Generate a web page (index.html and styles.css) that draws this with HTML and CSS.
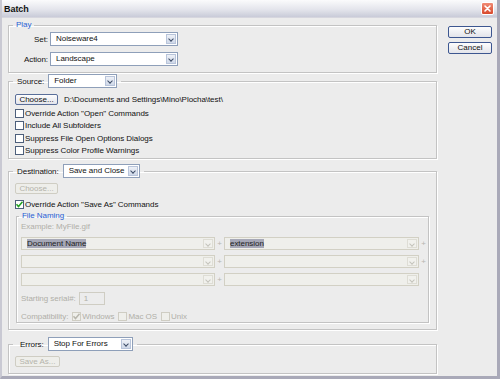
FILE: index.html
```html
<!DOCTYPE html>
<html lang="en">

<head>
    <meta charset="UTF-8">
    <meta name="viewport" content="width=device-width, initial-scale=1.0">
    <title>Batch</title>
    <link rel="stylesheet" href="styles.css">
</head>

<body>
    <div class="window">
        <div class="titlebar">
            <span class="title">Batch</span>
            <span class="close">
                <svg width="11" height="11" viewBox="0 0 11 11">
                    <path d="M3 3 L8 8 M8 3 L3 8" stroke="#fff" stroke-width="1.6" stroke-linecap="round" />
                </svg>
            </span>
        </div>

        <div class="client">
            <div class="groups">

                <fieldset class="group play">
                    <legend class="caption">Play</legend>
                    <div class="field-grid">
                        <span class="field-label">Set:</span>
                        <div class="select w-set"><span class="value">Noiseware4</span><span class="arrow"></span></div>
                        <span class="field-label">Action:</span>
                        <div class="select w-set"><span class="value">Landscape</span><span class="arrow"></span></div>
                    </div>
                </fieldset>

                <fieldset class="group source">
                    <legend class="legend-field">
                        <span>Source:</span>
                        <div class="select w-source"><span class="value">Folder</span><span class="arrow"></span></div>
                    </legend>
                    <div class="choose-row">
                        <button class="btn">Choose...</button>
                        <span class="path">D:\Documents and Settings\Mino\Plocha\test\</span>
                    </div>
                    <div class="check-list">
                        <label class="check"><span class="box"></span>Override Action "Open" Commands</label>
                        <label class="check"><span class="box"></span>Include All Subfolders</label>
                        <label class="check"><span class="box"></span>Suppress File Open Options Dialogs</label>
                        <label class="check"><span class="box"></span>Suppress Color Profile Warnings</label>
                    </div>
                </fieldset>

                <fieldset class="group destination">
                    <legend class="legend-field">
                        <span>Destination:</span>
                        <div class="select w-dest"><span class="value">Save and Close</span><span class="arrow"></span></div>
                    </legend>
                    <div class="choose-row">
                        <button class="btn disabled">Choose...</button>
                    </div>
                    <label class="check override"><span class="box checked">
                        <svg width="9" height="9" viewBox="0 0 9 9">
                            <path d="M1.5 4.2 L3.5 6.5 L7.5 1.8" fill="none" stroke="#21a121" stroke-width="1.5" />
                        </svg>
                    </span>Override Action "Save As" Commands</label>

                    <fieldset class="group naming">
                        <legend class="caption">File Naming</legend>
                        <div class="example">Example: MyFile.gif</div>
                        <div class="name-rows">
                            <div class="name-row">
                                <div class="select off"><span class="value"><mark>Document Name</mark></span><span class="arrow"></span></div>
                                <span class="plus">+</span>
                                <div class="select off"><span class="value"><mark>extension</mark></span><span class="arrow"></span></div>
                                <span class="plus">+</span>
                            </div>
                            <div class="name-row">
                                <div class="select off"><span class="value"></span><span class="arrow"></span></div>
                                <span class="plus">+</span>
                                <div class="select off"><span class="value"></span><span class="arrow"></span></div>
                                <span class="plus">+</span>
                            </div>
                            <div class="name-row">
                                <div class="select off"><span class="value"></span><span class="arrow"></span></div>
                                <span class="plus">+</span>
                                <div class="select off"><span class="value"></span><span class="arrow"></span></div>
                                <span class="plus"></span>
                            </div>
                        </div>
                        <div class="serial-row">
                            <span>Starting serial#:</span>
                            <span class="input off">1</span>
                        </div>
                        <div class="compat-row">
                            <span>Compatibility:</span>
                            <label class="check off"><span class="box">
                                <svg width="9" height="9" viewBox="0 0 9 9">
                                    <path d="M1.5 4.2 L3.5 6.5 L7.5 1.8" fill="none" stroke="#b8b6ad" stroke-width="1.5" />
                                </svg>
                            </span>Windows</label>
                            <label class="check off"><span class="box"></span>Mac OS</label>
                            <label class="check off"><span class="box"></span>Unix</label>
                        </div>
                    </fieldset>
                </fieldset>

                <fieldset class="group errors">
                    <legend class="legend-field">
                        <span>Errors:</span>
                        <div class="select w-errors"><span class="value">Stop For Errors</span><span class="arrow"></span></div>
                    </legend>
                    <button class="btn disabled save-as">Save As...</button>
                </fieldset>

            </div>

            <div class="actions">
                <button class="btn main">OK</button>
                <button class="btn main">Cancel</button>
            </div>
        </div>
    </div>
</body>

</html>
```

FILE: styles.css
```css
body,
html {
    margin: 0;
    padding: 0;
    font-family: "Liberation Sans", Arial, sans-serif;
    font-size: 8px;
    letter-spacing: -0.05px;
    color: #111;
    background: #ececec;
}

.window {
    width: 500px;
    height: 379px;
    box-sizing: border-box;
    background: #ececec;
    border-left: 2px solid #c9c9d3;
    border-right: 3px solid #a9a9b8;
    border-bottom: 3px solid #a9a9b8;
    overflow: hidden;
}

.titlebar {
    height: 18px;
    display: flex;
    align-items: center;
    justify-content: space-between;
    padding: 0 3px 0 2px;
    background: linear-gradient(#fbfbfc, #e4e5ec 55%, #c9cbd8);
    border-bottom: 1px solid #d6d6de;
    box-sizing: border-box;
}

.title {
    font-weight: bold;
    font-size: 9px;
    color: #111;
}

.close {
    width: 11px;
    height: 11px;
    display: flex;
    border: 1px solid #fff;
    border-radius: 2px;
    background: linear-gradient(#f08a74, #d8492c);
}

.client {
    display: flex;
    padding-left: 6px;
}

.groups {
    width: 429px;
    padding-top: 1px;
}

/* group boxes */

.group {
    margin: 0;
    padding: 0 6px;
    min-width: 0;
    border: 1px solid #c3c3c3;
    box-shadow: 1px 1px 0 #fff, inset 1px 1px 0 #fff;
}

.caption {
    color: #2a5fd4;
    line-height: 12px;
    padding: 0 3px;
    margin-left: -2px;
}

.legend-field {
    display: flex;
    align-items: center;
    padding: 0 4px;
    margin-left: -2px;
    height: 14px;
}

.legend-field .select {
    margin-left: 4px;
}

/* selects */

.select {
    height: 14px;
    box-sizing: border-box;
    display: flex;
    border: 1px solid #8e9fb9;
    background: #fff;
}

.select .value {
    flex: 1;
    padding-left: 5px;
    line-height: 12px;
    white-space: nowrap;
    overflow: hidden;
}

.select .arrow {
    width: 10px;
    margin: 1px;
    background: linear-gradient(#eef1f7, #cfd8e8);
    border: 1px solid #b8c4da;
    box-sizing: border-box;
    position: relative;
}

.select .arrow::after {
    content: "";
    position: absolute;
    left: 2px;
    top: 2px;
    width: 3px;
    height: 3px;
    border-right: 1.5px solid #3c4b66;
    border-bottom: 1.5px solid #3c4b66;
    transform: rotate(45deg);
}

.w-set { width: 128px; }
.w-source { width: 69px; }
.w-dest { width: 77px; }
.w-errors { width: 85px; }

.select.off {
    border-color: #d2d0c4;
    background: #efefeb;
}

.select.off .arrow {
    background: #f1f1ed;
    border-color: #deddd5;
}

.select.off .arrow::after {
    border-color: #c4c3bb;
}

mark {
    background: #a6a8b7;
    color: #222;
}

/* play */

.play {
    padding-bottom: 6px;
}

.field-grid {
    display: grid;
    grid-template-columns: 33px 128px;
    column-gap: 2px;
    row-gap: 6px;
    align-items: center;
    padding-top: 1px;
}

.field-label {
    text-align: right;
}

/* buttons */

.btn {
    font: inherit;
    color: #111;
    height: 11px;
    padding: 0 2px;
    line-height: 9px;
    white-space: nowrap;
    border: 1px solid #5a6f9a;
    border-radius: 2px;
    background: linear-gradient(#fdfdfd, #e3e4ea);
    box-sizing: border-box;
}

.btn.disabled {
    color: #b4b3ab;
    border-color: #cfcdc3;
    background: #eeeeea;
}

.actions {
    display: flex;
    flex-direction: column;
    gap: 4px;
    margin-left: 11px;
    padding-top: 8px;
}

.btn.main {
    width: 44px;
    height: 12px;
    line-height: 10px;
    border-color: #3d5790;
}

/* source */

.source {
    margin-top: 1px;
    padding-bottom: 1px;
}

.choose-row {
    display: flex;
    align-items: center;
    gap: 6px;
    padding-top: 6px;
}

.choose-row .btn {
    width: 43px;
}

.check-list {
    padding-top: 2px;
}

.check {
    display: flex;
    align-items: center;
    gap: 1px;
    height: 12.5px;
}

.box {
    width: 9px;
    height: 9px;
    box-sizing: border-box;
    border: 1px solid #4d5f7b;
    background: #fff;
    display: flex;
}

.box svg {
    margin: -1px;
}

/* destination */

.destination {
    margin-top: 5px;
    padding-bottom: 6px;
}

.destination .choose-row {
    padding-top: 5px;
}

.check.override {
    height: 12px;
    margin-top: 4px;
}

.naming {
    padding: 0 4px 0;
    margin: 0 1px;
}

.example {
    color: #b0afa8;
    line-height: 10px;
}

.name-rows {
    display: flex;
    flex-direction: column;
    gap: 5px;
    padding-top: 5px;
}

.name-row {
    display: grid;
    grid-template-columns: 194px 9px 195px 9px;
    align-items: center;
}

.name-row .select {
    height: 13px;
}

.plus {
    color: #b6b5ae;
    text-align: center;
}

.serial-row,
.compat-row {
    display: flex;
    align-items: center;
    color: #b0afa8;
}

.serial-row {
    gap: 3px;
    padding-top: 6px;
}

.input.off {
    width: 26px;
    height: 13px;
    box-sizing: border-box;
    border: 1px solid #cfcdc3;
    padding-left: 4px;
    line-height: 11px;
}

.compat-row {
    height: 12px;
    margin-top: 5px;
    gap: 4px;
}

.check.off .box {
    border-color: #cfcdc3;
    background: #efefeb;
}

/* errors */

.errors {
    margin-top: 7px;
    padding-bottom: 6px;
}

.errors .legend-field {
    padding-left: 7px;
}

.save-as {
    width: 45px;
    margin-top: 5px;
    display: block;
}
```
